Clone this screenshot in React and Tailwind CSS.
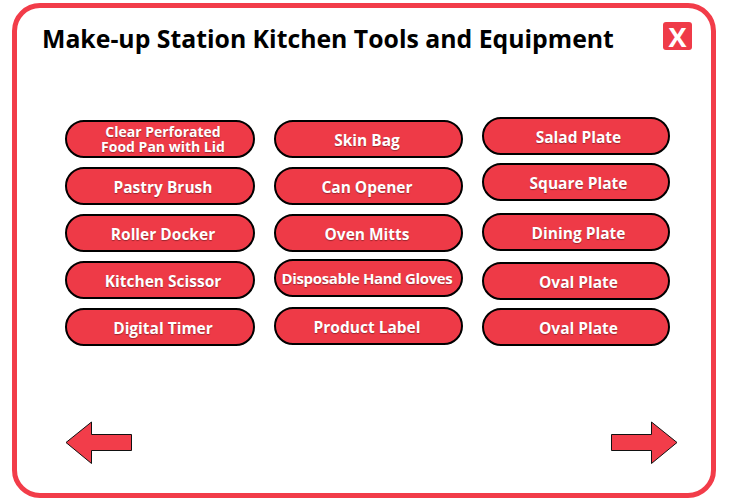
import React from 'react';

const columns = [
  {
    width: 'w-[190px]',
    shift: 'pl-[6px]',
    items: [
      { label: 'Clear Perforated\nFood Pan with Lid', mt: 'mt-0', small: true },
      { label: 'Pastry Brush', mt: 'mt-[9px]' },
      { label: 'Roller Docker', mt: 'mt-[9px]' },
      { label: 'Kitchen Scissor', mt: 'mt-[9px]' },
      { label: 'Digital Timer', mt: 'mt-[9px]' },
    ],
  },
  {
    width: 'w-[189px]',
    shift: 'pr-[3px]',
    items: [
      { label: 'Skin Bag', mt: 'mt-0' },
      { label: 'Can Opener', mt: 'mt-[9px]' },
      { label: 'Oven Mitts', mt: 'mt-[9px]' },
      { label: 'Disposable Hand Gloves', mt: 'mt-[7px]', tight: true },
      { label: 'Product Label', mt: 'mt-[10px]' },
    ],
  },
  {
    width: 'w-[188px]',
    shift: 'pl-[5px]',
    items: [
      { label: 'Salad Plate', mt: '-mt-[3px]' },
      { label: 'Square Plate', mt: 'mt-[8px]' },
      { label: 'Dining Plate', mt: 'mt-[12px]' },
      { label: 'Oval Plate', mt: 'mt-[11px]' },
      { label: 'Oval Plate', mt: 'mt-[8px]' },
    ],
  },
];

const ItemButton = ({ label, mt, small, tight, shift }) => (
  <button
    className={`${mt} ${shift} h-[38px] w-full rounded-full border-2 border-black bg-[#ee3a47] flex items-center justify-center text-white font-bold whitespace-pre-line text-center [text-shadow:0_1px_1px_rgba(0,0,0,0.35)] ${
      small
        ? 'text-[14px] leading-[15px]'
        : tight
        ? 'text-[15px] leading-[18px] tracking-[-0.35px]'
        : 'text-[15.5px] leading-[20px] pt-[2px]'
    }`}
  >
    {label}
  </button>
);

const LeftArrow = () => (
  <svg width="68" height="44" viewBox="0 0 68 44">
    <polygon
      points="1,21.5 26.5,1 26.5,13.5 66.5,13.5 66.5,29.5 26.5,29.5 26.5,42.5"
      fill="#f23d4a"
      stroke="#111"
      strokeWidth="1"
    />
  </svg>
);

const RightArrow = () => (
  <svg width="68" height="44" viewBox="0 0 68 44">
    <polygon
      points="67,21.5 41.5,1 41.5,13.5 1.5,13.5 1.5,29.5 41.5,29.5 41.5,42.5"
      fill="#f23d4a"
      stroke="#111"
      strokeWidth="1"
    />
  </svg>
);

export default function App() {
  return (
    <div className="w-[732px] h-[504px] bg-white pt-[3px] pl-[12px] font-['Open_Sans',sans-serif]">
      <div className="w-[704px] h-[495px] border-[5px] border-[#f23c49] rounded-[28px] flex flex-col">
        <div className="flex justify-between items-start pt-[14px] pl-[25px] pr-[19px]">
          <h1 className="mt-[1px] text-[24.8px] leading-[30px] font-bold text-black">
            Make-up Station Kitchen Tools and Equipment
          </h1>
          <button className="w-[29px] h-[28px] rounded-[3px] bg-[#ef3b48] text-white text-[27px] font-bold leading-none flex items-center justify-center">
            X
          </button>
        </div>

        <div className="mt-[67px] pl-[48px] flex gap-x-[19px]">
          {columns.map((col, ci) => (
            <div key={ci} className={`${col.width} flex flex-col`}>
              {col.items.map((it, i) => (
                <ItemButton key={i} {...it} shift={col.shift} />
              ))}
            </div>
          ))}
        </div>

        <div className="mt-[75px] pl-[48px] pr-[33px] flex justify-between">
          <LeftArrow />
          <RightArrow />
        </div>
      </div>
    </div>
  );
}
